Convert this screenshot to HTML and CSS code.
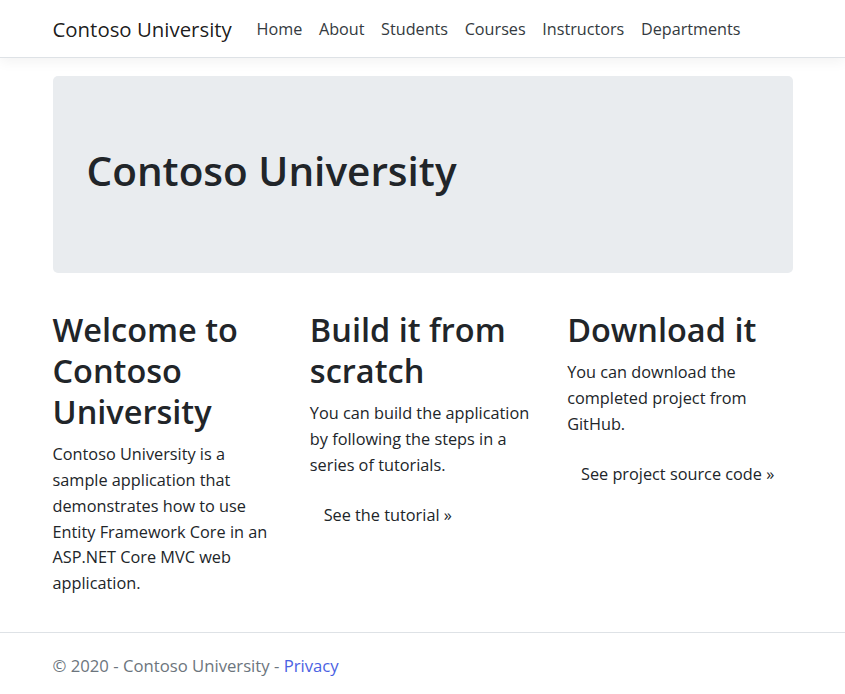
FILE: index.html
```html
<!DOCTYPE html>
<html lang="en">
<head>
<meta charset="utf-8">
<title>Home Page - Contoso University</title>
<link rel="stylesheet" href="styles.css">
</head>
<body>
<header class="navbar">
  <div class="container nav-inner">
    <a class="brand" href="#">Contoso University</a>
    <nav class="nav-links">
      <a href="#">Home</a>
      <a href="#">About</a>
      <a href="#">Students</a>
      <a href="#">Courses</a>
      <a href="#">Instructors</a>
      <a href="#">Departments</a>
    </nav>
  </div>
</header>
<main class="container main">
  <div class="jumbotron">
    <h1>Contoso University</h1>
  </div>
  <div class="row">
    <div class="col">
      <h2>Welcome to Contoso University</h2>
      <p>Contoso University is a sample application that demonstrates how to use Entity Framework Core in an ASP.NET Core MVC web application.</p>
    </div>
    <div class="col">
      <h2>Build it from scratch</h2>
      <p>You can build the application by following the steps in a series of tutorials.</p>
      <p><a class="btn" href="#">See the tutorial &raquo;</a></p>
    </div>
    <div class="col">
      <h2>Download it</h2>
      <p>You can download the completed project from GitHub.</p>
      <p><a class="btn" href="#">See project source code &raquo;</a></p>
    </div>
  </div>
</main>
<footer class="footer">
  <div class="container">&copy; 2020 - Contoso University - <a class="privacy" href="#">Privacy</a></div>
</footer>
</body>
</html>
```

FILE: styles.css
```css
* { box-sizing: border-box; }
html, body { margin: 0; padding: 0; }
body {
  font-family: "Open Sans", "Noto Sans", sans-serif;
  font-size: 16.3px;
  line-height: 25.7px;
  color: #212529;
  background: #fff;
}
a { text-decoration: none; }
.container {
  width: 740px;
  margin: 0 auto;
}
.navbar {
  height: 58px;
  border-bottom: 1px solid #dee2e6;
  box-shadow: 0 4px 12px rgba(0,0,0,.05);
  background: #fff;
}
.nav-inner {
  display: flex;
  align-items: center;
  height: 58px;
  padding-top: 2px;
}
.brand {
  font-size: 20.4px;
  color: rgba(0,0,0,.9);
  margin-right: 16.5px;
}
.nav-links { display: flex; }
.nav-links a {
  color: #343a40;
  padding: 0 8.3px;
  font-size: 16.2px;
}
.main { padding: 18px 0 17px; }
.jumbotron {
  background: #e9ecef;
  border-radius: 5px;
  padding: 68.5px 34px;
  margin-bottom: 36px;
}
.jumbotron h1 {
  margin: 0 0 8.5px;
  font-size: 40.5px;
  font-weight: 600;
  line-height: 51.4px;
}
.row {
  display: grid;
  grid-template-columns: repeat(3, 1fr);
  column-gap: 32px;
}
.col h2 {
  margin: 0 0 10.5px;
  font-size: 32.5px;
  font-weight: 600;
  line-height: 41px;
}
.col p { margin: 0 0 17px; }
.btn {
  display: inline-block;
  padding: 6.4px 12.8px;
  border: 1px solid transparent;
  color: #212529;
}
.footer {
  border-top: 1px solid #dee2e6;
  color: #6c757d;
  font-size: 16.7px;
  line-height: 66px;
  white-space: nowrap;
  margin-top: 1px;
}
.privacy { color: #4a62e3; }
```
